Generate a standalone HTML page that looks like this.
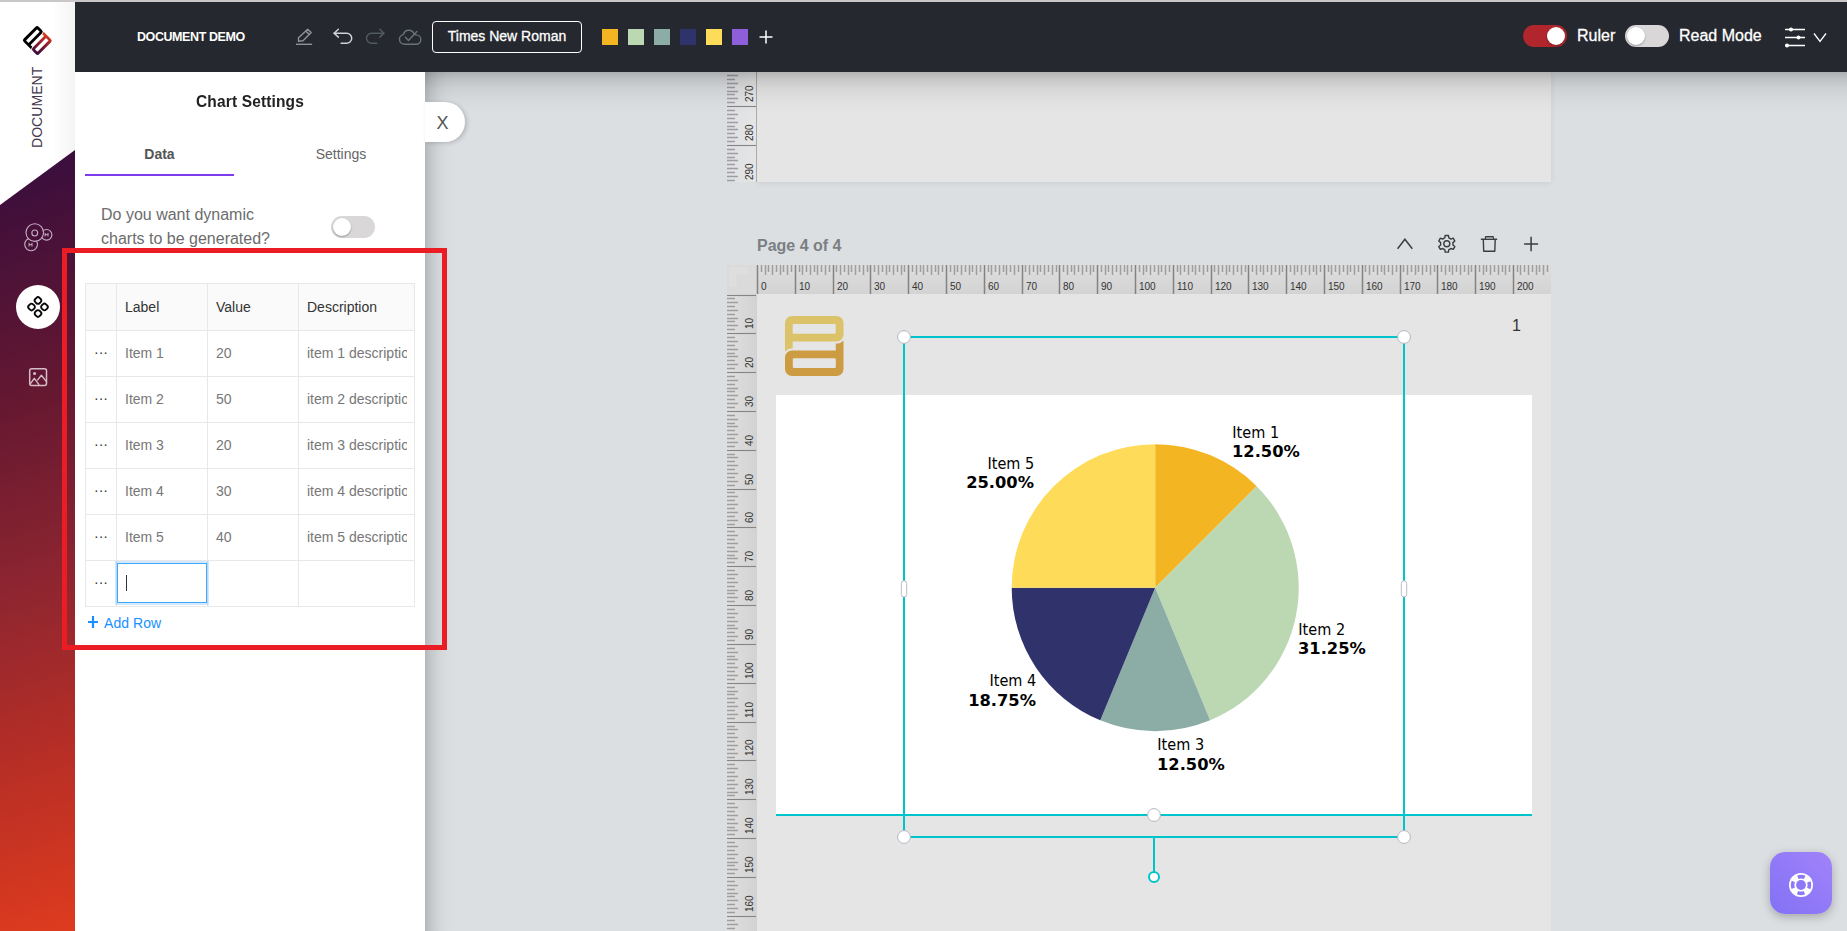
<!DOCTYPE html>
<html lang="en">
<head>
<meta charset="utf-8">
<title>Document Demo</title>
<style>
*{box-sizing:border-box;margin:0;padding:0}
html,body{width:1847px;height:931px;overflow:hidden}
body{position:relative;background:#dcdfe2;font-family:"Liberation Sans",Arial,sans-serif;color:#333}
.abs{position:absolute}
svg text{font-family:"Liberation Sans",Arial,sans-serif}
#topline{left:0;top:0;width:1847px;height:2px;background:#c9c7c7}
#canvas{left:425px;top:72px;width:1422px;height:859px;background:#dcdfe2;overflow:hidden}
#topbar{left:75px;top:2px;width:1772px;height:70px;background:#25282e}
#sidebar{left:0;top:2px;width:75px;height:929px;background:#fff;overflow:hidden}
#sidegrad{left:0;top:0;width:75px;height:929px;background:linear-gradient(163deg,#2b093b 0%,#3a0e3d 18%,#621731 41%,#8d2530 62%,#ba2f25 82%,#de3b1e 100%);clip-path:polygon(0 203px,75px 148px,75px 929px,0 929px)}
#panel{left:75px;top:72px;width:350px;height:859px;background:#fff}
.tt{color:#fff;font-weight:bold;font-size:12.5px;letter-spacing:-.42px}
.sw{position:absolute;top:27px;width:16px;height:16px}
.tog{position:absolute;width:44px;height:22px;border-radius:11px}
.tog i{position:absolute;top:2px;width:18px;height:18px;border-radius:9px;background:#fff;box-shadow:0 1px 2px rgba(0,0,0,.3)}
table{border-collapse:collapse;position:absolute;left:10px;top:211px;font-size:14px;table-layout:fixed;width:329px}
td,th{border:1px solid #e8e8e8;height:46px;text-align:left;font-weight:normal;padding:0 0 0 8px;white-space:nowrap;overflow:hidden}
th{background:#fafafa;color:#333;height:47px}
td{color:#777;padding-bottom:2px}
td div{overflow:hidden;white-space:nowrap;width:100px}
td.d{color:#333;padding:0 0 3px 0;text-align:center;font-size:14px;letter-spacing:0}
.hd{position:absolute;width:13px;height:13px;border-radius:50%;background:#fff;border:1px solid #c8c8c8;box-shadow:0 0 2px rgba(0,0,0,.2)}
</style>
</head>
<body>
<div id="canvas" class="abs">
  <!-- coordinates inside canvas are offset by (425,72); use wrapper to keep absolute page coords -->
  <div class="abs" style="left:-425px;top:-72px;width:1847px;height:931px">
    <!-- previous page -->
    <div class="abs" style="left:757px;top:72px;width:794px;height:110px;background:#e5e5e5;box-shadow:0 1px 6px rgba(0,0,0,.08)"></div>
    <svg width="30" height="110" viewBox="0 0 30 110" style="position:absolute;left:727px;top:72px">
<defs><linearGradient id="vg1" x1="0" y1="0" x2="1" y2="0"><stop offset="0" stop-color="#dee0e3"/><stop offset="1" stop-color="#e5e5e5"/></linearGradient></defs>
<rect x="0" y="0" width="30" height="110" fill="url(#vg1)"/>
<line x1="29.5" y1="0" x2="29.5" y2="110" stroke="#aaa" stroke-width="1"/>
<line x1="0" y1="-4.5" x2="29" y2="-4.5" stroke="#858585" stroke-width="1.100"/>
<text transform="translate(26,-9) rotate(-90)" font-size="10" fill="#333">260</text>
<line x1="0" y1="3.5" x2="11" y2="3.5" stroke="#9e9e9e" stroke-width="1.500"/>
<line x1="0" y1="7.5" x2="8" y2="7.5" stroke="#9e9e9e" stroke-width="1.500"/>
<line x1="0" y1="11.5" x2="11" y2="11.5" stroke="#9e9e9e" stroke-width="1.500"/>
<line x1="0" y1="15.5" x2="8" y2="15.5" stroke="#9e9e9e" stroke-width="1.500"/>
<line x1="0" y1="19.5" x2="11" y2="19.5" stroke="#9e9e9e" stroke-width="1.500"/>
<line x1="0" y1="22.5" x2="8" y2="22.5" stroke="#9e9e9e" stroke-width="1.500"/>
<line x1="0" y1="26.5" x2="11" y2="26.5" stroke="#9e9e9e" stroke-width="1.500"/>
<line x1="0" y1="30.5" x2="8" y2="30.5" stroke="#9e9e9e" stroke-width="1.500"/>
<line x1="0" y1="34.5" x2="29" y2="34.5" stroke="#858585" stroke-width="1.100"/>
<text transform="translate(26,30) rotate(-90)" font-size="10" fill="#333">270</text>
<line x1="0" y1="38.5" x2="8" y2="38.5" stroke="#9e9e9e" stroke-width="1.500"/>
<line x1="0" y1="42.5" x2="11" y2="42.5" stroke="#9e9e9e" stroke-width="1.500"/>
<line x1="0" y1="46.5" x2="8" y2="46.5" stroke="#9e9e9e" stroke-width="1.500"/>
<line x1="0" y1="50.5" x2="11" y2="50.5" stroke="#9e9e9e" stroke-width="1.500"/>
<line x1="0" y1="54.5" x2="8" y2="54.5" stroke="#9e9e9e" stroke-width="1.500"/>
<line x1="0" y1="57.5" x2="11" y2="57.5" stroke="#9e9e9e" stroke-width="1.500"/>
<line x1="0" y1="61.5" x2="8" y2="61.5" stroke="#9e9e9e" stroke-width="1.500"/>
<line x1="0" y1="65.5" x2="11" y2="65.5" stroke="#9e9e9e" stroke-width="1.500"/>
<line x1="0" y1="69.5" x2="8" y2="69.5" stroke="#9e9e9e" stroke-width="1.500"/>
<line x1="0" y1="73.5" x2="29" y2="73.5" stroke="#858585" stroke-width="1.100"/>
<text transform="translate(26,69) rotate(-90)" font-size="10" fill="#333">280</text>
<line x1="0" y1="77.5" x2="8" y2="77.5" stroke="#9e9e9e" stroke-width="1.500"/>
<line x1="0" y1="81.5" x2="11" y2="81.5" stroke="#9e9e9e" stroke-width="1.500"/>
<line x1="0" y1="85.5" x2="8" y2="85.5" stroke="#9e9e9e" stroke-width="1.500"/>
<line x1="0" y1="88.5" x2="11" y2="88.5" stroke="#9e9e9e" stroke-width="1.500"/>
<line x1="0" y1="92.5" x2="8" y2="92.5" stroke="#9e9e9e" stroke-width="1.500"/>
<line x1="0" y1="96.5" x2="11" y2="96.5" stroke="#9e9e9e" stroke-width="1.500"/>
<line x1="0" y1="100.5" x2="8" y2="100.5" stroke="#9e9e9e" stroke-width="1.500"/>
<line x1="0" y1="104.5" x2="11" y2="104.5" stroke="#9e9e9e" stroke-width="1.500"/>
<line x1="0" y1="108.5" x2="8" y2="108.5" stroke="#9e9e9e" stroke-width="1.500"/>
<text transform="translate(26,108) rotate(-90)" font-size="10" fill="#333">290</text>
</svg>
    <div class="abs" style="left:757px;top:237px;font-size:16px;font-weight:bold;color:#7b7f84">Page 4 of 4</div>
    <!-- page icons -->
    <svg class="abs" style="left:1390px;top:228px" width="160" height="32" viewBox="1390 228 160 32" fill="none" stroke="#3a3d40" stroke-width="1.400" stroke-linecap="round" stroke-linejoin="round">
      <path d="M1397.600 248.800L1404.900 239.300L1412.300 248.800" stroke-width="1.500" stroke-linejoin="miter" stroke-linecap="butt"/>
      <path d="M1444.78 237.94L1445.18 235.46L1448.42 235.46L1448.82 237.94A6.2 6.2 0 0 1 1450.87 239.12L1453.22 238.22L1454.84 241.03L1452.89 242.62A6.2 6.2 0 0 1 1452.89 244.98L1454.84 246.57L1453.22 249.38L1450.87 248.48A6.2 6.2 0 0 1 1448.82 249.66L1448.42 252.14L1445.18 252.14L1444.78 249.66A6.2 6.2 0 0 1 1442.73 248.48L1440.38 249.38L1438.76 246.57L1440.71 244.98A6.2 6.2 0 0 1 1440.71 242.62L1438.76 241.03L1440.38 238.22L1442.73 239.12A6.2 6.2 0 0 1 1444.78 237.94Z"/>
      <circle cx="1446.8" cy="243.8" r="3"/>
      <path d="M1481.400 239.300H1496.600M1485.600 239.300V236.800H1493.200V239.300M1483.300 239.300L1483.700 251.300H1494.800L1495.200 239.300"/>
      <path d="M1486 237.500H1493V239H1486Z" fill="#999" stroke="none"/>
      <path d="M1531.100 236.800V251.200M1524.100 244H1538.100" stroke-width="1.500" stroke-linecap="butt"/>
    </svg>
    <!-- page 4 -->
    <div class="abs" style="left:757px;top:294px;width:794px;height:640px;background:#e5e5e5"></div>
    <svg class="hr" width="824" height="29" viewBox="0 0 824 29" style="position:absolute;left:727px;top:265px">
<defs><linearGradient id="hg" x1="0" y1="0" x2="0" y2="1"><stop offset="0" stop-color="#dedede"/><stop offset="1" stop-color="#d3d3d3"/></linearGradient></defs>
<rect x="0" y="0" width="824" height="29" fill="url(#hg)"/>
<rect x="0" y="0" width="30" height="29" fill="#dadada"/>
<path d="M2 2.300h19.600v7.300h-12v12.200h-7.600z" fill="#dedede"/>
<line x1="30.5" y1="0" x2="30.5" y2="29" stroke="#838383" stroke-width="1.500"/>
<text x="34" y="25.300" font-size="10" fill="#333">0</text>
<line x1="34.5" y1="0" x2="34.5" y2="7" stroke="#9e9e9e" stroke-width="1.500"/>
<line x1="38.5" y1="0" x2="38.5" y2="10" stroke="#9e9e9e" stroke-width="1.500"/>
<line x1="41.5" y1="0" x2="41.5" y2="7" stroke="#9e9e9e" stroke-width="1.500"/>
<line x1="45.5" y1="0" x2="45.5" y2="10" stroke="#9e9e9e" stroke-width="1.500"/>
<line x1="49.5" y1="0" x2="49.5" y2="7" stroke="#9e9e9e" stroke-width="1.500"/>
<line x1="53.5" y1="0" x2="53.5" y2="10" stroke="#9e9e9e" stroke-width="1.500"/>
<line x1="56.5" y1="0" x2="56.5" y2="7" stroke="#9e9e9e" stroke-width="1.500"/>
<line x1="60.5" y1="0" x2="60.5" y2="10" stroke="#9e9e9e" stroke-width="1.500"/>
<line x1="64.5" y1="0" x2="64.5" y2="7" stroke="#9e9e9e" stroke-width="1.500"/>
<line x1="68.5" y1="0" x2="68.5" y2="29" stroke="#838383" stroke-width="1.500"/>
<text x="72" y="25.300" font-size="10" fill="#333">10</text>
<line x1="72.5" y1="0" x2="72.5" y2="7" stroke="#9e9e9e" stroke-width="1.500"/>
<line x1="75.5" y1="0" x2="75.5" y2="10" stroke="#9e9e9e" stroke-width="1.500"/>
<line x1="79.5" y1="0" x2="79.5" y2="7" stroke="#9e9e9e" stroke-width="1.500"/>
<line x1="83.5" y1="0" x2="83.5" y2="10" stroke="#9e9e9e" stroke-width="1.500"/>
<line x1="87.5" y1="0" x2="87.5" y2="7" stroke="#9e9e9e" stroke-width="1.500"/>
<line x1="90.5" y1="0" x2="90.5" y2="10" stroke="#9e9e9e" stroke-width="1.500"/>
<line x1="94.5" y1="0" x2="94.5" y2="7" stroke="#9e9e9e" stroke-width="1.500"/>
<line x1="98.5" y1="0" x2="98.5" y2="10" stroke="#9e9e9e" stroke-width="1.500"/>
<line x1="102.5" y1="0" x2="102.5" y2="7" stroke="#9e9e9e" stroke-width="1.500"/>
<line x1="106.5" y1="0" x2="106.5" y2="29" stroke="#838383" stroke-width="1.500"/>
<text x="110" y="25.300" font-size="10" fill="#333">20</text>
<line x1="109.5" y1="0" x2="109.5" y2="7" stroke="#9e9e9e" stroke-width="1.500"/>
<line x1="113.5" y1="0" x2="113.5" y2="10" stroke="#9e9e9e" stroke-width="1.500"/>
<line x1="117.5" y1="0" x2="117.5" y2="7" stroke="#9e9e9e" stroke-width="1.500"/>
<line x1="121.5" y1="0" x2="121.5" y2="10" stroke="#9e9e9e" stroke-width="1.500"/>
<line x1="124.5" y1="0" x2="124.5" y2="7" stroke="#9e9e9e" stroke-width="1.500"/>
<line x1="128.5" y1="0" x2="128.5" y2="10" stroke="#9e9e9e" stroke-width="1.500"/>
<line x1="132.5" y1="0" x2="132.5" y2="7" stroke="#9e9e9e" stroke-width="1.500"/>
<line x1="136.5" y1="0" x2="136.5" y2="10" stroke="#9e9e9e" stroke-width="1.500"/>
<line x1="140.5" y1="0" x2="140.5" y2="7" stroke="#9e9e9e" stroke-width="1.500"/>
<line x1="143.5" y1="0" x2="143.5" y2="29" stroke="#838383" stroke-width="1.500"/>
<text x="147" y="25.300" font-size="10" fill="#333">30</text>
<line x1="147.5" y1="0" x2="147.5" y2="7" stroke="#9e9e9e" stroke-width="1.500"/>
<line x1="151.5" y1="0" x2="151.5" y2="10" stroke="#9e9e9e" stroke-width="1.500"/>
<line x1="155.5" y1="0" x2="155.5" y2="7" stroke="#9e9e9e" stroke-width="1.500"/>
<line x1="159.5" y1="0" x2="159.5" y2="10" stroke="#9e9e9e" stroke-width="1.500"/>
<line x1="162.5" y1="0" x2="162.5" y2="7" stroke="#9e9e9e" stroke-width="1.500"/>
<line x1="166.5" y1="0" x2="166.5" y2="10" stroke="#9e9e9e" stroke-width="1.500"/>
<line x1="170.5" y1="0" x2="170.5" y2="7" stroke="#9e9e9e" stroke-width="1.500"/>
<line x1="174.5" y1="0" x2="174.5" y2="10" stroke="#9e9e9e" stroke-width="1.500"/>
<line x1="177.5" y1="0" x2="177.5" y2="7" stroke="#9e9e9e" stroke-width="1.500"/>
<line x1="181.5" y1="0" x2="181.5" y2="29" stroke="#838383" stroke-width="1.500"/>
<text x="185" y="25.300" font-size="10" fill="#333">40</text>
<line x1="185.5" y1="0" x2="185.5" y2="7" stroke="#9e9e9e" stroke-width="1.500"/>
<line x1="189.5" y1="0" x2="189.5" y2="10" stroke="#9e9e9e" stroke-width="1.500"/>
<line x1="193.5" y1="0" x2="193.5" y2="7" stroke="#9e9e9e" stroke-width="1.500"/>
<line x1="196.5" y1="0" x2="196.5" y2="10" stroke="#9e9e9e" stroke-width="1.500"/>
<line x1="200.5" y1="0" x2="200.5" y2="7" stroke="#9e9e9e" stroke-width="1.500"/>
<line x1="204.5" y1="0" x2="204.5" y2="10" stroke="#9e9e9e" stroke-width="1.500"/>
<line x1="208.5" y1="0" x2="208.5" y2="7" stroke="#9e9e9e" stroke-width="1.500"/>
<line x1="211.5" y1="0" x2="211.5" y2="10" stroke="#9e9e9e" stroke-width="1.500"/>
<line x1="215.5" y1="0" x2="215.5" y2="7" stroke="#9e9e9e" stroke-width="1.500"/>
<line x1="219.5" y1="0" x2="219.5" y2="29" stroke="#838383" stroke-width="1.500"/>
<text x="223" y="25.300" font-size="10" fill="#333">50</text>
<line x1="223.5" y1="0" x2="223.5" y2="7" stroke="#9e9e9e" stroke-width="1.500"/>
<line x1="227.5" y1="0" x2="227.5" y2="10" stroke="#9e9e9e" stroke-width="1.500"/>
<line x1="230.5" y1="0" x2="230.5" y2="7" stroke="#9e9e9e" stroke-width="1.500"/>
<line x1="234.5" y1="0" x2="234.5" y2="10" stroke="#9e9e9e" stroke-width="1.500"/>
<line x1="238.5" y1="0" x2="238.5" y2="7" stroke="#9e9e9e" stroke-width="1.500"/>
<line x1="242.5" y1="0" x2="242.5" y2="10" stroke="#9e9e9e" stroke-width="1.500"/>
<line x1="245.5" y1="0" x2="245.5" y2="7" stroke="#9e9e9e" stroke-width="1.500"/>
<line x1="249.5" y1="0" x2="249.5" y2="10" stroke="#9e9e9e" stroke-width="1.500"/>
<line x1="253.5" y1="0" x2="253.5" y2="7" stroke="#9e9e9e" stroke-width="1.500"/>
<line x1="257.5" y1="0" x2="257.5" y2="29" stroke="#838383" stroke-width="1.500"/>
<text x="261" y="25.300" font-size="10" fill="#333">60</text>
<line x1="261.5" y1="0" x2="261.5" y2="7" stroke="#9e9e9e" stroke-width="1.500"/>
<line x1="264.5" y1="0" x2="264.5" y2="10" stroke="#9e9e9e" stroke-width="1.500"/>
<line x1="268.5" y1="0" x2="268.5" y2="7" stroke="#9e9e9e" stroke-width="1.500"/>
<line x1="272.5" y1="0" x2="272.5" y2="10" stroke="#9e9e9e" stroke-width="1.500"/>
<line x1="276.5" y1="0" x2="276.5" y2="7" stroke="#9e9e9e" stroke-width="1.500"/>
<line x1="279.5" y1="0" x2="279.5" y2="10" stroke="#9e9e9e" stroke-width="1.500"/>
<line x1="283.5" y1="0" x2="283.5" y2="7" stroke="#9e9e9e" stroke-width="1.500"/>
<line x1="287.5" y1="0" x2="287.5" y2="10" stroke="#9e9e9e" stroke-width="1.500"/>
<line x1="291.5" y1="0" x2="291.5" y2="7" stroke="#9e9e9e" stroke-width="1.500"/>
<line x1="295.5" y1="0" x2="295.5" y2="29" stroke="#838383" stroke-width="1.500"/>
<text x="299" y="25.300" font-size="10" fill="#333">70</text>
<line x1="298.5" y1="0" x2="298.5" y2="7" stroke="#9e9e9e" stroke-width="1.500"/>
<line x1="302.5" y1="0" x2="302.5" y2="10" stroke="#9e9e9e" stroke-width="1.500"/>
<line x1="306.5" y1="0" x2="306.5" y2="7" stroke="#9e9e9e" stroke-width="1.500"/>
<line x1="310.5" y1="0" x2="310.5" y2="10" stroke="#9e9e9e" stroke-width="1.500"/>
<line x1="313.5" y1="0" x2="313.5" y2="7" stroke="#9e9e9e" stroke-width="1.500"/>
<line x1="317.5" y1="0" x2="317.5" y2="10" stroke="#9e9e9e" stroke-width="1.500"/>
<line x1="321.5" y1="0" x2="321.5" y2="7" stroke="#9e9e9e" stroke-width="1.500"/>
<line x1="325.5" y1="0" x2="325.5" y2="10" stroke="#9e9e9e" stroke-width="1.500"/>
<line x1="329.5" y1="0" x2="329.5" y2="7" stroke="#9e9e9e" stroke-width="1.500"/>
<line x1="332.5" y1="0" x2="332.5" y2="29" stroke="#838383" stroke-width="1.500"/>
<text x="336" y="25.300" font-size="10" fill="#333">80</text>
<line x1="336.5" y1="0" x2="336.5" y2="7" stroke="#9e9e9e" stroke-width="1.500"/>
<line x1="340.5" y1="0" x2="340.5" y2="10" stroke="#9e9e9e" stroke-width="1.500"/>
<line x1="344.5" y1="0" x2="344.5" y2="7" stroke="#9e9e9e" stroke-width="1.500"/>
<line x1="347.5" y1="0" x2="347.5" y2="10" stroke="#9e9e9e" stroke-width="1.500"/>
<line x1="351.5" y1="0" x2="351.5" y2="7" stroke="#9e9e9e" stroke-width="1.500"/>
<line x1="355.5" y1="0" x2="355.5" y2="10" stroke="#9e9e9e" stroke-width="1.500"/>
<line x1="359.5" y1="0" x2="359.5" y2="7" stroke="#9e9e9e" stroke-width="1.500"/>
<line x1="363.5" y1="0" x2="363.5" y2="10" stroke="#9e9e9e" stroke-width="1.500"/>
<line x1="366.5" y1="0" x2="366.5" y2="7" stroke="#9e9e9e" stroke-width="1.500"/>
<line x1="370.5" y1="0" x2="370.5" y2="29" stroke="#838383" stroke-width="1.500"/>
<text x="374" y="25.300" font-size="10" fill="#333">90</text>
<line x1="374.5" y1="0" x2="374.5" y2="7" stroke="#9e9e9e" stroke-width="1.500"/>
<line x1="378.5" y1="0" x2="378.5" y2="10" stroke="#9e9e9e" stroke-width="1.500"/>
<line x1="381.5" y1="0" x2="381.5" y2="7" stroke="#9e9e9e" stroke-width="1.500"/>
<line x1="385.5" y1="0" x2="385.5" y2="10" stroke="#9e9e9e" stroke-width="1.500"/>
<line x1="389.5" y1="0" x2="389.5" y2="7" stroke="#9e9e9e" stroke-width="1.500"/>
<line x1="393.5" y1="0" x2="393.5" y2="10" stroke="#9e9e9e" stroke-width="1.500"/>
<line x1="397.5" y1="0" x2="397.5" y2="7" stroke="#9e9e9e" stroke-width="1.500"/>
<line x1="400.5" y1="0" x2="400.5" y2="10" stroke="#9e9e9e" stroke-width="1.500"/>
<line x1="404.5" y1="0" x2="404.5" y2="7" stroke="#9e9e9e" stroke-width="1.500"/>
<line x1="408.5" y1="0" x2="408.5" y2="29" stroke="#838383" stroke-width="1.500"/>
<text x="412" y="25.300" font-size="10" fill="#333">100</text>
<line x1="412.5" y1="0" x2="412.5" y2="7" stroke="#9e9e9e" stroke-width="1.500"/>
<line x1="416.5" y1="0" x2="416.5" y2="10" stroke="#9e9e9e" stroke-width="1.500"/>
<line x1="419.5" y1="0" x2="419.5" y2="7" stroke="#9e9e9e" stroke-width="1.500"/>
<line x1="423.5" y1="0" x2="423.5" y2="10" stroke="#9e9e9e" stroke-width="1.500"/>
<line x1="427.5" y1="0" x2="427.5" y2="7" stroke="#9e9e9e" stroke-width="1.500"/>
<line x1="431.5" y1="0" x2="431.5" y2="10" stroke="#9e9e9e" stroke-width="1.500"/>
<line x1="434.5" y1="0" x2="434.5" y2="7" stroke="#9e9e9e" stroke-width="1.500"/>
<line x1="438.5" y1="0" x2="438.5" y2="10" stroke="#9e9e9e" stroke-width="1.500"/>
<line x1="442.5" y1="0" x2="442.5" y2="7" stroke="#9e9e9e" stroke-width="1.500"/>
<line x1="446.5" y1="0" x2="446.5" y2="29" stroke="#838383" stroke-width="1.500"/>
<text x="450" y="25.300" font-size="10" fill="#333">110</text>
<line x1="450.5" y1="0" x2="450.5" y2="7" stroke="#9e9e9e" stroke-width="1.500"/>
<line x1="453.5" y1="0" x2="453.5" y2="10" stroke="#9e9e9e" stroke-width="1.500"/>
<line x1="457.5" y1="0" x2="457.5" y2="7" stroke="#9e9e9e" stroke-width="1.500"/>
<line x1="461.5" y1="0" x2="461.5" y2="10" stroke="#9e9e9e" stroke-width="1.500"/>
<line x1="465.5" y1="0" x2="465.5" y2="7" stroke="#9e9e9e" stroke-width="1.500"/>
<line x1="468.5" y1="0" x2="468.5" y2="10" stroke="#9e9e9e" stroke-width="1.500"/>
<line x1="472.5" y1="0" x2="472.5" y2="7" stroke="#9e9e9e" stroke-width="1.500"/>
<line x1="476.5" y1="0" x2="476.5" y2="10" stroke="#9e9e9e" stroke-width="1.500"/>
<line x1="480.5" y1="0" x2="480.5" y2="7" stroke="#9e9e9e" stroke-width="1.500"/>
<line x1="484.5" y1="0" x2="484.5" y2="29" stroke="#838383" stroke-width="1.500"/>
<text x="488" y="25.300" font-size="10" fill="#333">120</text>
<line x1="487.5" y1="0" x2="487.5" y2="7" stroke="#9e9e9e" stroke-width="1.500"/>
<line x1="491.5" y1="0" x2="491.5" y2="10" stroke="#9e9e9e" stroke-width="1.500"/>
<line x1="495.5" y1="0" x2="495.5" y2="7" stroke="#9e9e9e" stroke-width="1.500"/>
<line x1="499.5" y1="0" x2="499.5" y2="10" stroke="#9e9e9e" stroke-width="1.500"/>
<line x1="502.5" y1="0" x2="502.5" y2="7" stroke="#9e9e9e" stroke-width="1.500"/>
<line x1="506.5" y1="0" x2="506.5" y2="10" stroke="#9e9e9e" stroke-width="1.500"/>
<line x1="510.5" y1="0" x2="510.5" y2="7" stroke="#9e9e9e" stroke-width="1.500"/>
<line x1="514.5" y1="0" x2="514.5" y2="10" stroke="#9e9e9e" stroke-width="1.500"/>
<line x1="518.5" y1="0" x2="518.5" y2="7" stroke="#9e9e9e" stroke-width="1.500"/>
<line x1="521.5" y1="0" x2="521.5" y2="29" stroke="#838383" stroke-width="1.500"/>
<text x="525" y="25.300" font-size="10" fill="#333">130</text>
<line x1="525.5" y1="0" x2="525.5" y2="7" stroke="#9e9e9e" stroke-width="1.500"/>
<line x1="529.5" y1="0" x2="529.5" y2="10" stroke="#9e9e9e" stroke-width="1.500"/>
<line x1="533.5" y1="0" x2="533.5" y2="7" stroke="#9e9e9e" stroke-width="1.500"/>
<line x1="536.5" y1="0" x2="536.5" y2="10" stroke="#9e9e9e" stroke-width="1.500"/>
<line x1="540.5" y1="0" x2="540.5" y2="7" stroke="#9e9e9e" stroke-width="1.500"/>
<line x1="544.5" y1="0" x2="544.5" y2="10" stroke="#9e9e9e" stroke-width="1.500"/>
<line x1="548.5" y1="0" x2="548.5" y2="7" stroke="#9e9e9e" stroke-width="1.500"/>
<line x1="552.5" y1="0" x2="552.5" y2="10" stroke="#9e9e9e" stroke-width="1.500"/>
<line x1="555.5" y1="0" x2="555.5" y2="7" stroke="#9e9e9e" stroke-width="1.500"/>
<line x1="559.5" y1="0" x2="559.5" y2="29" stroke="#838383" stroke-width="1.500"/>
<text x="563" y="25.300" font-size="10" fill="#333">140</text>
<line x1="563.5" y1="0" x2="563.5" y2="7" stroke="#9e9e9e" stroke-width="1.500"/>
<line x1="567.5" y1="0" x2="567.5" y2="10" stroke="#9e9e9e" stroke-width="1.500"/>
<line x1="570.5" y1="0" x2="570.5" y2="7" stroke="#9e9e9e" stroke-width="1.500"/>
<line x1="574.5" y1="0" x2="574.5" y2="10" stroke="#9e9e9e" stroke-width="1.500"/>
<line x1="578.5" y1="0" x2="578.5" y2="7" stroke="#9e9e9e" stroke-width="1.500"/>
<line x1="582.5" y1="0" x2="582.5" y2="10" stroke="#9e9e9e" stroke-width="1.500"/>
<line x1="586.5" y1="0" x2="586.5" y2="7" stroke="#9e9e9e" stroke-width="1.500"/>
<line x1="589.5" y1="0" x2="589.5" y2="10" stroke="#9e9e9e" stroke-width="1.500"/>
<line x1="593.5" y1="0" x2="593.5" y2="7" stroke="#9e9e9e" stroke-width="1.500"/>
<line x1="597.5" y1="0" x2="597.5" y2="29" stroke="#838383" stroke-width="1.500"/>
<text x="601" y="25.300" font-size="10" fill="#333">150</text>
<line x1="601.5" y1="0" x2="601.5" y2="7" stroke="#9e9e9e" stroke-width="1.500"/>
<line x1="604.5" y1="0" x2="604.5" y2="10" stroke="#9e9e9e" stroke-width="1.500"/>
<line x1="608.5" y1="0" x2="608.5" y2="7" stroke="#9e9e9e" stroke-width="1.500"/>
<line x1="612.5" y1="0" x2="612.5" y2="10" stroke="#9e9e9e" stroke-width="1.500"/>
<line x1="616.5" y1="0" x2="616.5" y2="7" stroke="#9e9e9e" stroke-width="1.500"/>
<line x1="620.5" y1="0" x2="620.5" y2="10" stroke="#9e9e9e" stroke-width="1.500"/>
<line x1="623.5" y1="0" x2="623.5" y2="7" stroke="#9e9e9e" stroke-width="1.500"/>
<line x1="627.5" y1="0" x2="627.5" y2="10" stroke="#9e9e9e" stroke-width="1.500"/>
<line x1="631.5" y1="0" x2="631.5" y2="7" stroke="#9e9e9e" stroke-width="1.500"/>
<line x1="635.5" y1="0" x2="635.5" y2="29" stroke="#838383" stroke-width="1.500"/>
<text x="639" y="25.300" font-size="10" fill="#333">160</text>
<line x1="638.5" y1="0" x2="638.5" y2="7" stroke="#9e9e9e" stroke-width="1.500"/>
<line x1="642.5" y1="0" x2="642.5" y2="10" stroke="#9e9e9e" stroke-width="1.500"/>
<line x1="646.5" y1="0" x2="646.5" y2="7" stroke="#9e9e9e" stroke-width="1.500"/>
<line x1="650.5" y1="0" x2="650.5" y2="10" stroke="#9e9e9e" stroke-width="1.500"/>
<line x1="654.5" y1="0" x2="654.5" y2="7" stroke="#9e9e9e" stroke-width="1.500"/>
<line x1="657.5" y1="0" x2="657.5" y2="10" stroke="#9e9e9e" stroke-width="1.500"/>
<line x1="661.5" y1="0" x2="661.5" y2="7" stroke="#9e9e9e" stroke-width="1.500"/>
<line x1="665.5" y1="0" x2="665.5" y2="10" stroke="#9e9e9e" stroke-width="1.500"/>
<line x1="669.5" y1="0" x2="669.5" y2="7" stroke="#9e9e9e" stroke-width="1.500"/>
<line x1="673.5" y1="0" x2="673.5" y2="29" stroke="#838383" stroke-width="1.500"/>
<text x="677" y="25.300" font-size="10" fill="#333">170</text>
<line x1="676.5" y1="0" x2="676.5" y2="7" stroke="#9e9e9e" stroke-width="1.500"/>
<line x1="680.5" y1="0" x2="680.5" y2="10" stroke="#9e9e9e" stroke-width="1.500"/>
<line x1="684.5" y1="0" x2="684.5" y2="7" stroke="#9e9e9e" stroke-width="1.500"/>
<line x1="688.5" y1="0" x2="688.5" y2="10" stroke="#9e9e9e" stroke-width="1.500"/>
<line x1="691.5" y1="0" x2="691.5" y2="7" stroke="#9e9e9e" stroke-width="1.500"/>
<line x1="695.5" y1="0" x2="695.5" y2="10" stroke="#9e9e9e" stroke-width="1.500"/>
<line x1="699.5" y1="0" x2="699.5" y2="7" stroke="#9e9e9e" stroke-width="1.500"/>
<line x1="703.5" y1="0" x2="703.5" y2="10" stroke="#9e9e9e" stroke-width="1.500"/>
<line x1="707.5" y1="0" x2="707.5" y2="7" stroke="#9e9e9e" stroke-width="1.500"/>
<line x1="710.5" y1="0" x2="710.5" y2="29" stroke="#838383" stroke-width="1.500"/>
<text x="714" y="25.300" font-size="10" fill="#333">180</text>
<line x1="714.5" y1="0" x2="714.5" y2="7" stroke="#9e9e9e" stroke-width="1.500"/>
<line x1="718.5" y1="0" x2="718.5" y2="10" stroke="#9e9e9e" stroke-width="1.500"/>
<line x1="722.5" y1="0" x2="722.5" y2="7" stroke="#9e9e9e" stroke-width="1.500"/>
<line x1="725.5" y1="0" x2="725.5" y2="10" stroke="#9e9e9e" stroke-width="1.500"/>
<line x1="729.5" y1="0" x2="729.5" y2="7" stroke="#9e9e9e" stroke-width="1.500"/>
<line x1="733.5" y1="0" x2="733.5" y2="10" stroke="#9e9e9e" stroke-width="1.500"/>
<line x1="737.5" y1="0" x2="737.5" y2="7" stroke="#9e9e9e" stroke-width="1.500"/>
<line x1="741.5" y1="0" x2="741.5" y2="10" stroke="#9e9e9e" stroke-width="1.500"/>
<line x1="744.5" y1="0" x2="744.5" y2="7" stroke="#9e9e9e" stroke-width="1.500"/>
<line x1="748.5" y1="0" x2="748.5" y2="29" stroke="#838383" stroke-width="1.500"/>
<text x="752" y="25.300" font-size="10" fill="#333">190</text>
<line x1="752.5" y1="0" x2="752.5" y2="7" stroke="#9e9e9e" stroke-width="1.500"/>
<line x1="756.5" y1="0" x2="756.5" y2="10" stroke="#9e9e9e" stroke-width="1.500"/>
<line x1="759.5" y1="0" x2="759.5" y2="7" stroke="#9e9e9e" stroke-width="1.500"/>
<line x1="763.5" y1="0" x2="763.5" y2="10" stroke="#9e9e9e" stroke-width="1.500"/>
<line x1="767.5" y1="0" x2="767.5" y2="7" stroke="#9e9e9e" stroke-width="1.500"/>
<line x1="771.5" y1="0" x2="771.5" y2="10" stroke="#9e9e9e" stroke-width="1.500"/>
<line x1="775.5" y1="0" x2="775.5" y2="7" stroke="#9e9e9e" stroke-width="1.500"/>
<line x1="778.5" y1="0" x2="778.5" y2="10" stroke="#9e9e9e" stroke-width="1.500"/>
<line x1="782.5" y1="0" x2="782.5" y2="7" stroke="#9e9e9e" stroke-width="1.500"/>
<line x1="786.5" y1="0" x2="786.5" y2="29" stroke="#838383" stroke-width="1.500"/>
<text x="790" y="25.300" font-size="10" fill="#333">200</text>
<line x1="790.5" y1="0" x2="790.5" y2="7" stroke="#9e9e9e" stroke-width="1.500"/>
<line x1="793.5" y1="0" x2="793.5" y2="10" stroke="#9e9e9e" stroke-width="1.500"/>
<line x1="797.5" y1="0" x2="797.5" y2="7" stroke="#9e9e9e" stroke-width="1.500"/>
<line x1="801.5" y1="0" x2="801.5" y2="10" stroke="#9e9e9e" stroke-width="1.500"/>
<line x1="805.5" y1="0" x2="805.5" y2="7" stroke="#9e9e9e" stroke-width="1.500"/>
<line x1="809.5" y1="0" x2="809.5" y2="10" stroke="#9e9e9e" stroke-width="1.500"/>
<line x1="812.5" y1="0" x2="812.5" y2="7" stroke="#9e9e9e" stroke-width="1.500"/>
<line x1="816.5" y1="0" x2="816.5" y2="10" stroke="#9e9e9e" stroke-width="1.500"/>
<line x1="820.5" y1="0" x2="820.5" y2="7" stroke="#9e9e9e" stroke-width="1.500"/>
</svg>
    <svg width="30" height="637" viewBox="0 0 30 637" style="position:absolute;left:727px;top:294px">
<defs><linearGradient id="vg2" x1="0" y1="0" x2="1" y2="0"><stop offset="0" stop-color="#e0e0e0"/><stop offset="1" stop-color="#d2d2d2"/></linearGradient></defs>
<rect x="0" y="0" width="30" height="637" fill="url(#vg2)"/>
<line x1="0" y1="1.5" x2="29" y2="1.5" stroke="#858585" stroke-width="1.100"/>
<line x1="0" y1="4.5" x2="8" y2="4.5" stroke="#9e9e9e" stroke-width="1.500"/>
<line x1="0" y1="8.5" x2="11" y2="8.5" stroke="#9e9e9e" stroke-width="1.500"/>
<line x1="0" y1="12.5" x2="8" y2="12.5" stroke="#9e9e9e" stroke-width="1.500"/>
<line x1="0" y1="16.5" x2="11" y2="16.5" stroke="#9e9e9e" stroke-width="1.500"/>
<line x1="0" y1="20.5" x2="8" y2="20.5" stroke="#9e9e9e" stroke-width="1.500"/>
<line x1="0" y1="24.5" x2="11" y2="24.5" stroke="#9e9e9e" stroke-width="1.500"/>
<line x1="0" y1="27.5" x2="8" y2="27.5" stroke="#9e9e9e" stroke-width="1.500"/>
<line x1="0" y1="31.5" x2="11" y2="31.5" stroke="#9e9e9e" stroke-width="1.500"/>
<line x1="0" y1="35.5" x2="8" y2="35.5" stroke="#9e9e9e" stroke-width="1.500"/>
<line x1="0" y1="39.5" x2="29" y2="39.5" stroke="#858585" stroke-width="1.100"/>
<text transform="translate(26,35) rotate(-90)" font-size="10" fill="#333">10</text>
<line x1="0" y1="43.5" x2="8" y2="43.5" stroke="#9e9e9e" stroke-width="1.500"/>
<line x1="0" y1="47.5" x2="11" y2="47.5" stroke="#9e9e9e" stroke-width="1.500"/>
<line x1="0" y1="51.5" x2="8" y2="51.5" stroke="#9e9e9e" stroke-width="1.500"/>
<line x1="0" y1="55.5" x2="11" y2="55.5" stroke="#9e9e9e" stroke-width="1.500"/>
<line x1="0" y1="59.5" x2="8" y2="59.5" stroke="#9e9e9e" stroke-width="1.500"/>
<line x1="0" y1="62.5" x2="11" y2="62.5" stroke="#9e9e9e" stroke-width="1.500"/>
<line x1="0" y1="66.5" x2="8" y2="66.5" stroke="#9e9e9e" stroke-width="1.500"/>
<line x1="0" y1="70.5" x2="11" y2="70.5" stroke="#9e9e9e" stroke-width="1.500"/>
<line x1="0" y1="74.5" x2="8" y2="74.5" stroke="#9e9e9e" stroke-width="1.500"/>
<line x1="0" y1="78.5" x2="29" y2="78.5" stroke="#858585" stroke-width="1.100"/>
<text transform="translate(26,74) rotate(-90)" font-size="10" fill="#333">20</text>
<line x1="0" y1="82.5" x2="8" y2="82.5" stroke="#9e9e9e" stroke-width="1.500"/>
<line x1="0" y1="86.5" x2="11" y2="86.5" stroke="#9e9e9e" stroke-width="1.500"/>
<line x1="0" y1="90.5" x2="8" y2="90.5" stroke="#9e9e9e" stroke-width="1.500"/>
<line x1="0" y1="94.5" x2="11" y2="94.5" stroke="#9e9e9e" stroke-width="1.500"/>
<line x1="0" y1="97.5" x2="8" y2="97.5" stroke="#9e9e9e" stroke-width="1.500"/>
<line x1="0" y1="101.5" x2="11" y2="101.5" stroke="#9e9e9e" stroke-width="1.500"/>
<line x1="0" y1="105.5" x2="8" y2="105.5" stroke="#9e9e9e" stroke-width="1.500"/>
<line x1="0" y1="109.5" x2="11" y2="109.5" stroke="#9e9e9e" stroke-width="1.500"/>
<line x1="0" y1="113.5" x2="8" y2="113.5" stroke="#9e9e9e" stroke-width="1.500"/>
<line x1="0" y1="117.5" x2="29" y2="117.5" stroke="#858585" stroke-width="1.100"/>
<text transform="translate(26,113) rotate(-90)" font-size="10" fill="#333">30</text>
<line x1="0" y1="121.5" x2="8" y2="121.5" stroke="#9e9e9e" stroke-width="1.500"/>
<line x1="0" y1="125.5" x2="11" y2="125.5" stroke="#9e9e9e" stroke-width="1.500"/>
<line x1="0" y1="129.5" x2="8" y2="129.5" stroke="#9e9e9e" stroke-width="1.500"/>
<line x1="0" y1="132.5" x2="11" y2="132.5" stroke="#9e9e9e" stroke-width="1.500"/>
<line x1="0" y1="136.5" x2="8" y2="136.5" stroke="#9e9e9e" stroke-width="1.500"/>
<line x1="0" y1="140.5" x2="11" y2="140.5" stroke="#9e9e9e" stroke-width="1.500"/>
<line x1="0" y1="144.5" x2="8" y2="144.5" stroke="#9e9e9e" stroke-width="1.500"/>
<line x1="0" y1="148.5" x2="11" y2="148.5" stroke="#9e9e9e" stroke-width="1.500"/>
<line x1="0" y1="152.5" x2="8" y2="152.5" stroke="#9e9e9e" stroke-width="1.500"/>
<line x1="0" y1="156.5" x2="29" y2="156.5" stroke="#858585" stroke-width="1.100"/>
<text transform="translate(26,152) rotate(-90)" font-size="10" fill="#333">40</text>
<line x1="0" y1="160.5" x2="8" y2="160.5" stroke="#9e9e9e" stroke-width="1.500"/>
<line x1="0" y1="163.5" x2="11" y2="163.5" stroke="#9e9e9e" stroke-width="1.500"/>
<line x1="0" y1="167.5" x2="8" y2="167.5" stroke="#9e9e9e" stroke-width="1.500"/>
<line x1="0" y1="171.5" x2="11" y2="171.5" stroke="#9e9e9e" stroke-width="1.500"/>
<line x1="0" y1="175.5" x2="8" y2="175.5" stroke="#9e9e9e" stroke-width="1.500"/>
<line x1="0" y1="179.5" x2="11" y2="179.5" stroke="#9e9e9e" stroke-width="1.500"/>
<line x1="0" y1="183.5" x2="8" y2="183.5" stroke="#9e9e9e" stroke-width="1.500"/>
<line x1="0" y1="187.5" x2="11" y2="187.5" stroke="#9e9e9e" stroke-width="1.500"/>
<line x1="0" y1="191.5" x2="8" y2="191.5" stroke="#9e9e9e" stroke-width="1.500"/>
<line x1="0" y1="195.5" x2="29" y2="195.5" stroke="#858585" stroke-width="1.100"/>
<text transform="translate(26,191) rotate(-90)" font-size="10" fill="#333">50</text>
<line x1="0" y1="198.5" x2="8" y2="198.5" stroke="#9e9e9e" stroke-width="1.500"/>
<line x1="0" y1="202.5" x2="11" y2="202.5" stroke="#9e9e9e" stroke-width="1.500"/>
<line x1="0" y1="206.5" x2="8" y2="206.5" stroke="#9e9e9e" stroke-width="1.500"/>
<line x1="0" y1="210.5" x2="11" y2="210.5" stroke="#9e9e9e" stroke-width="1.500"/>
<line x1="0" y1="214.5" x2="8" y2="214.5" stroke="#9e9e9e" stroke-width="1.500"/>
<line x1="0" y1="218.5" x2="11" y2="218.5" stroke="#9e9e9e" stroke-width="1.500"/>
<line x1="0" y1="222.5" x2="8" y2="222.5" stroke="#9e9e9e" stroke-width="1.500"/>
<line x1="0" y1="226.5" x2="11" y2="226.5" stroke="#9e9e9e" stroke-width="1.500"/>
<line x1="0" y1="230.5" x2="8" y2="230.5" stroke="#9e9e9e" stroke-width="1.500"/>
<line x1="0" y1="233.5" x2="29" y2="233.5" stroke="#858585" stroke-width="1.100"/>
<text transform="translate(26,229) rotate(-90)" font-size="10" fill="#333">60</text>
<line x1="0" y1="237.5" x2="8" y2="237.5" stroke="#9e9e9e" stroke-width="1.500"/>
<line x1="0" y1="241.5" x2="11" y2="241.5" stroke="#9e9e9e" stroke-width="1.500"/>
<line x1="0" y1="245.5" x2="8" y2="245.5" stroke="#9e9e9e" stroke-width="1.500"/>
<line x1="0" y1="249.5" x2="11" y2="249.5" stroke="#9e9e9e" stroke-width="1.500"/>
<line x1="0" y1="253.5" x2="8" y2="253.5" stroke="#9e9e9e" stroke-width="1.500"/>
<line x1="0" y1="257.5" x2="11" y2="257.5" stroke="#9e9e9e" stroke-width="1.500"/>
<line x1="0" y1="261.5" x2="8" y2="261.5" stroke="#9e9e9e" stroke-width="1.500"/>
<line x1="0" y1="264.5" x2="11" y2="264.5" stroke="#9e9e9e" stroke-width="1.500"/>
<line x1="0" y1="268.5" x2="8" y2="268.5" stroke="#9e9e9e" stroke-width="1.500"/>
<line x1="0" y1="272.5" x2="29" y2="272.5" stroke="#858585" stroke-width="1.100"/>
<text transform="translate(26,268) rotate(-90)" font-size="10" fill="#333">70</text>
<line x1="0" y1="276.5" x2="8" y2="276.5" stroke="#9e9e9e" stroke-width="1.500"/>
<line x1="0" y1="280.5" x2="11" y2="280.5" stroke="#9e9e9e" stroke-width="1.500"/>
<line x1="0" y1="284.5" x2="8" y2="284.5" stroke="#9e9e9e" stroke-width="1.500"/>
<line x1="0" y1="288.5" x2="11" y2="288.5" stroke="#9e9e9e" stroke-width="1.500"/>
<line x1="0" y1="292.5" x2="8" y2="292.5" stroke="#9e9e9e" stroke-width="1.500"/>
<line x1="0" y1="296.5" x2="11" y2="296.5" stroke="#9e9e9e" stroke-width="1.500"/>
<line x1="0" y1="299.5" x2="8" y2="299.5" stroke="#9e9e9e" stroke-width="1.500"/>
<line x1="0" y1="303.5" x2="11" y2="303.5" stroke="#9e9e9e" stroke-width="1.500"/>
<line x1="0" y1="307.5" x2="8" y2="307.5" stroke="#9e9e9e" stroke-width="1.500"/>
<line x1="0" y1="311.5" x2="29" y2="311.5" stroke="#858585" stroke-width="1.100"/>
<text transform="translate(26,307) rotate(-90)" font-size="10" fill="#333">80</text>
<line x1="0" y1="315.5" x2="8" y2="315.5" stroke="#9e9e9e" stroke-width="1.500"/>
<line x1="0" y1="319.5" x2="11" y2="319.5" stroke="#9e9e9e" stroke-width="1.500"/>
<line x1="0" y1="323.5" x2="8" y2="323.5" stroke="#9e9e9e" stroke-width="1.500"/>
<line x1="0" y1="327.5" x2="11" y2="327.5" stroke="#9e9e9e" stroke-width="1.500"/>
<line x1="0" y1="331.5" x2="8" y2="331.5" stroke="#9e9e9e" stroke-width="1.500"/>
<line x1="0" y1="334.5" x2="11" y2="334.5" stroke="#9e9e9e" stroke-width="1.500"/>
<line x1="0" y1="338.5" x2="8" y2="338.5" stroke="#9e9e9e" stroke-width="1.500"/>
<line x1="0" y1="342.5" x2="11" y2="342.5" stroke="#9e9e9e" stroke-width="1.500"/>
<line x1="0" y1="346.5" x2="8" y2="346.5" stroke="#9e9e9e" stroke-width="1.500"/>
<line x1="0" y1="350.5" x2="29" y2="350.5" stroke="#858585" stroke-width="1.100"/>
<text transform="translate(26,346) rotate(-90)" font-size="10" fill="#333">90</text>
<line x1="0" y1="354.5" x2="8" y2="354.5" stroke="#9e9e9e" stroke-width="1.500"/>
<line x1="0" y1="358.5" x2="11" y2="358.5" stroke="#9e9e9e" stroke-width="1.500"/>
<line x1="0" y1="362.5" x2="8" y2="362.5" stroke="#9e9e9e" stroke-width="1.500"/>
<line x1="0" y1="365.5" x2="11" y2="365.5" stroke="#9e9e9e" stroke-width="1.500"/>
<line x1="0" y1="369.5" x2="8" y2="369.5" stroke="#9e9e9e" stroke-width="1.500"/>
<line x1="0" y1="373.5" x2="11" y2="373.5" stroke="#9e9e9e" stroke-width="1.500"/>
<line x1="0" y1="377.5" x2="8" y2="377.5" stroke="#9e9e9e" stroke-width="1.500"/>
<line x1="0" y1="381.5" x2="11" y2="381.5" stroke="#9e9e9e" stroke-width="1.500"/>
<line x1="0" y1="385.5" x2="8" y2="385.5" stroke="#9e9e9e" stroke-width="1.500"/>
<line x1="0" y1="389.5" x2="29" y2="389.5" stroke="#858585" stroke-width="1.100"/>
<text transform="translate(26,385) rotate(-90)" font-size="10" fill="#333">100</text>
<line x1="0" y1="393.5" x2="8" y2="393.5" stroke="#9e9e9e" stroke-width="1.500"/>
<line x1="0" y1="397.5" x2="11" y2="397.5" stroke="#9e9e9e" stroke-width="1.500"/>
<line x1="0" y1="400.5" x2="8" y2="400.5" stroke="#9e9e9e" stroke-width="1.500"/>
<line x1="0" y1="404.5" x2="11" y2="404.5" stroke="#9e9e9e" stroke-width="1.500"/>
<line x1="0" y1="408.5" x2="8" y2="408.5" stroke="#9e9e9e" stroke-width="1.500"/>
<line x1="0" y1="412.5" x2="11" y2="412.5" stroke="#9e9e9e" stroke-width="1.500"/>
<line x1="0" y1="416.5" x2="8" y2="416.5" stroke="#9e9e9e" stroke-width="1.500"/>
<line x1="0" y1="420.5" x2="11" y2="420.5" stroke="#9e9e9e" stroke-width="1.500"/>
<line x1="0" y1="424.5" x2="8" y2="424.5" stroke="#9e9e9e" stroke-width="1.500"/>
<line x1="0" y1="428.5" x2="29" y2="428.5" stroke="#858585" stroke-width="1.100"/>
<text transform="translate(26,424) rotate(-90)" font-size="10" fill="#333">110</text>
<line x1="0" y1="432.5" x2="8" y2="432.5" stroke="#9e9e9e" stroke-width="1.500"/>
<line x1="0" y1="435.5" x2="11" y2="435.5" stroke="#9e9e9e" stroke-width="1.500"/>
<line x1="0" y1="439.5" x2="8" y2="439.5" stroke="#9e9e9e" stroke-width="1.500"/>
<line x1="0" y1="443.5" x2="11" y2="443.5" stroke="#9e9e9e" stroke-width="1.500"/>
<line x1="0" y1="447.5" x2="8" y2="447.5" stroke="#9e9e9e" stroke-width="1.500"/>
<line x1="0" y1="451.5" x2="11" y2="451.5" stroke="#9e9e9e" stroke-width="1.500"/>
<line x1="0" y1="455.5" x2="8" y2="455.5" stroke="#9e9e9e" stroke-width="1.500"/>
<line x1="0" y1="459.5" x2="11" y2="459.5" stroke="#9e9e9e" stroke-width="1.500"/>
<line x1="0" y1="463.5" x2="8" y2="463.5" stroke="#9e9e9e" stroke-width="1.500"/>
<line x1="0" y1="466.5" x2="29" y2="466.5" stroke="#858585" stroke-width="1.100"/>
<text transform="translate(26,462) rotate(-90)" font-size="10" fill="#333">120</text>
<line x1="0" y1="470.5" x2="8" y2="470.5" stroke="#9e9e9e" stroke-width="1.500"/>
<line x1="0" y1="474.5" x2="11" y2="474.5" stroke="#9e9e9e" stroke-width="1.500"/>
<line x1="0" y1="478.5" x2="8" y2="478.5" stroke="#9e9e9e" stroke-width="1.500"/>
<line x1="0" y1="482.5" x2="11" y2="482.5" stroke="#9e9e9e" stroke-width="1.500"/>
<line x1="0" y1="486.5" x2="8" y2="486.5" stroke="#9e9e9e" stroke-width="1.500"/>
<line x1="0" y1="490.5" x2="11" y2="490.5" stroke="#9e9e9e" stroke-width="1.500"/>
<line x1="0" y1="494.5" x2="8" y2="494.5" stroke="#9e9e9e" stroke-width="1.500"/>
<line x1="0" y1="498.5" x2="11" y2="498.5" stroke="#9e9e9e" stroke-width="1.500"/>
<line x1="0" y1="501.5" x2="8" y2="501.5" stroke="#9e9e9e" stroke-width="1.500"/>
<line x1="0" y1="505.5" x2="29" y2="505.5" stroke="#858585" stroke-width="1.100"/>
<text transform="translate(26,501) rotate(-90)" font-size="10" fill="#333">130</text>
<line x1="0" y1="509.5" x2="8" y2="509.5" stroke="#9e9e9e" stroke-width="1.500"/>
<line x1="0" y1="513.5" x2="11" y2="513.5" stroke="#9e9e9e" stroke-width="1.500"/>
<line x1="0" y1="517.5" x2="8" y2="517.5" stroke="#9e9e9e" stroke-width="1.500"/>
<line x1="0" y1="521.5" x2="11" y2="521.5" stroke="#9e9e9e" stroke-width="1.500"/>
<line x1="0" y1="525.5" x2="8" y2="525.5" stroke="#9e9e9e" stroke-width="1.500"/>
<line x1="0" y1="529.5" x2="11" y2="529.5" stroke="#9e9e9e" stroke-width="1.500"/>
<line x1="0" y1="533.5" x2="8" y2="533.5" stroke="#9e9e9e" stroke-width="1.500"/>
<line x1="0" y1="536.5" x2="11" y2="536.5" stroke="#9e9e9e" stroke-width="1.500"/>
<line x1="0" y1="540.5" x2="8" y2="540.5" stroke="#9e9e9e" stroke-width="1.500"/>
<line x1="0" y1="544.5" x2="29" y2="544.5" stroke="#858585" stroke-width="1.100"/>
<text transform="translate(26,540) rotate(-90)" font-size="10" fill="#333">140</text>
<line x1="0" y1="548.5" x2="8" y2="548.5" stroke="#9e9e9e" stroke-width="1.500"/>
<line x1="0" y1="552.5" x2="11" y2="552.5" stroke="#9e9e9e" stroke-width="1.500"/>
<line x1="0" y1="556.5" x2="8" y2="556.5" stroke="#9e9e9e" stroke-width="1.500"/>
<line x1="0" y1="560.5" x2="11" y2="560.5" stroke="#9e9e9e" stroke-width="1.500"/>
<line x1="0" y1="564.5" x2="8" y2="564.5" stroke="#9e9e9e" stroke-width="1.500"/>
<line x1="0" y1="568.5" x2="11" y2="568.5" stroke="#9e9e9e" stroke-width="1.500"/>
<line x1="0" y1="571.5" x2="8" y2="571.5" stroke="#9e9e9e" stroke-width="1.500"/>
<line x1="0" y1="575.5" x2="11" y2="575.5" stroke="#9e9e9e" stroke-width="1.500"/>
<line x1="0" y1="579.5" x2="8" y2="579.5" stroke="#9e9e9e" stroke-width="1.500"/>
<line x1="0" y1="583.5" x2="29" y2="583.5" stroke="#858585" stroke-width="1.100"/>
<text transform="translate(26,579) rotate(-90)" font-size="10" fill="#333">150</text>
<line x1="0" y1="587.5" x2="8" y2="587.5" stroke="#9e9e9e" stroke-width="1.500"/>
<line x1="0" y1="591.5" x2="11" y2="591.5" stroke="#9e9e9e" stroke-width="1.500"/>
<line x1="0" y1="595.5" x2="8" y2="595.5" stroke="#9e9e9e" stroke-width="1.500"/>
<line x1="0" y1="599.5" x2="11" y2="599.5" stroke="#9e9e9e" stroke-width="1.500"/>
<line x1="0" y1="602.5" x2="8" y2="602.5" stroke="#9e9e9e" stroke-width="1.500"/>
<line x1="0" y1="606.5" x2="11" y2="606.5" stroke="#9e9e9e" stroke-width="1.500"/>
<line x1="0" y1="610.5" x2="8" y2="610.5" stroke="#9e9e9e" stroke-width="1.500"/>
<line x1="0" y1="614.5" x2="11" y2="614.5" stroke="#9e9e9e" stroke-width="1.500"/>
<line x1="0" y1="618.5" x2="8" y2="618.5" stroke="#9e9e9e" stroke-width="1.500"/>
<line x1="0" y1="622.5" x2="29" y2="622.5" stroke="#858585" stroke-width="1.100"/>
<text transform="translate(26,618) rotate(-90)" font-size="10" fill="#333">160</text>
<line x1="0" y1="626.5" x2="8" y2="626.5" stroke="#9e9e9e" stroke-width="1.500"/>
<line x1="0" y1="630.5" x2="11" y2="630.5" stroke="#9e9e9e" stroke-width="1.500"/>
<line x1="0" y1="634.5" x2="8" y2="634.5" stroke="#9e9e9e" stroke-width="1.500"/>
<text transform="translate(26,657) rotate(-90)" font-size="10" fill="#333">170</text>
</svg>
    <div class="abs" style="left:776px;top:395px;width:756px;height:420px;background:#fff"></div>
    <div class="abs" style="left:1512px;top:316.500px;font-size:16px;color:#333">1</div>
    <!-- logo -->
    <svg class="abs" style="left:784.5px;top:316px" width="59" height="60" viewBox="0 0 59 60">
      <path d="M7 0H51.5A7 7 0 0 1 58.5 7V18.5A7 7 0 0 1 51.5 25.500H7.700V32.530A9 9 0 0 0 0 35.840V7A7 7 0 0 1 7 0ZM8.700 8.100H49.700a1 1 0 0 1 1 1V16.800a1 1 0 0 1 -1 1H8.700a1 1 0 0 1 -1 -1V9.100a1 1 0 0 1 1 -1Z" fill="#dcc36a" fill-rule="evenodd"/>
      <path d="M51.5 60H7A7 7 0 0 1 0 53V41.5A7 7 0 0 1 7 34.500H50.800V27.470A9 9 0 0 0 58.5 24.160V53A7 7 0 0 1 51.5 60ZM49.800 51.900H8.800a1 1 0 0 1 -1 -1V43.200a1 1 0 0 1 1 -1H49.800a1 1 0 0 1 1 1V50.900a1 1 0 0 1 -1 1Z" fill="#cd9b41" fill-rule="evenodd"/>
    </svg>
    <!-- chart -->
    <svg class="abs" style="left:0;top:0" width="1847" height="931" viewBox="0 0 1847 931">
      <path d="M1155.2 587.7L1155.20 444.20A143.5 143.5 0 0 1 1256.67 486.23Z" fill="#f3b521"/>
<path d="M1155.2 587.7L1256.67 486.23A143.5 143.5 0 0 1 1210.12 720.28Z" fill="#bbd8b3"/>
<path d="M1155.2 587.7L1210.12 720.28A143.5 143.5 0 0 1 1100.28 720.28Z" fill="#8bada6"/>
<path d="M1155.2 587.7L1100.28 720.28A143.5 143.5 0 0 1 1011.70 587.70Z" fill="#30336b"/>
<path d="M1155.2 587.7L1011.70 587.70A143.5 143.5 0 0 1 1155.20 444.20Z" fill="#fedc5a"/>
      <g font-family="DejaVu Sans, sans-serif" font-size="14.500" fill="#000" style="font-family:'DejaVu Sans',sans-serif">
        <text transform="translate(1232.3,437.5) scale(1,1.09)" style="font-family:'DejaVu Sans',sans-serif">Item 1</text>
        <text x="1232" y="456.500" font-weight="bold" font-size="16.300" style="font-family:'DejaVu Sans',sans-serif">12.50%</text>
        <text transform="translate(1298.3,634.5) scale(1,1.09)" style="font-family:'DejaVu Sans',sans-serif">Item 2</text>
        <text x="1298" y="654" font-weight="bold" font-size="16.300" style="font-family:'DejaVu Sans',sans-serif">31.25%</text>
        <text transform="translate(1157.3,750.0) scale(1,1.09)" style="font-family:'DejaVu Sans',sans-serif">Item 3</text>
        <text x="1157" y="769.500" font-weight="bold" font-size="16.300" style="font-family:'DejaVu Sans',sans-serif">12.50%</text>
        <text transform="translate(1036.3,686.0) scale(1,1.09)" text-anchor="end" style="font-family:'DejaVu Sans',sans-serif">Item 4</text>
        <text x="1036" y="705.500" text-anchor="end" font-weight="bold" font-size="16.300" style="font-family:'DejaVu Sans',sans-serif">18.75%</text>
        <text transform="translate(1034.3,468.5) scale(1,1.09)" text-anchor="end" style="font-family:'DejaVu Sans',sans-serif">Item 5</text>
        <text x="1034" y="487.500" text-anchor="end" font-weight="bold" font-size="16.300" style="font-family:'DejaVu Sans',sans-serif">25.00%</text>
      </g>
      <!-- selection -->
      <g stroke="#00c4cc" stroke-width="2" fill="none">
        <rect x="904" y="337" width="500" height="500"/>
        <line x1="776" y1="815" x2="1532" y2="815"/>
        <line x1="1154" y1="837" x2="1154" y2="872"/>
      </g>
      <g fill="#fff" stroke="#b4b7c0" stroke-width="1">
        <circle cx="904" cy="337" r="6.400"/>
        <circle cx="1404" cy="337" r="6.400"/>
        <circle cx="904" cy="837" r="6.400"/>
        <circle cx="1404" cy="837" r="6.400"/>
        <circle cx="1154" cy="815" r="6.400"/>
        <rect x="901.300" y="580.800" width="5.400" height="16.200" rx="2.700" stroke="#b9bcc8"/>
        <rect x="1401.300" y="580.800" width="5.400" height="16.200" rx="2.700" stroke="#b9bcc8"/>
      </g>
      <circle cx="1154" cy="877" r="5" fill="#fff" stroke="#00c4cc" stroke-width="2"/>
    </svg>
    <!-- help button -->
    <div class="abs" style="left:1770px;top:852px;width:62px;height:62px;border-radius:15px;background:linear-gradient(45deg,#8271f5,#a183fa);box-shadow:0 3px 10px rgba(0,0,0,.25)">
      <svg class="abs" style="left:17.400px;top:18.600px" width="28" height="28" viewBox="-14 -14 28 28">
        <circle r="12" fill="#fff"/>
        <circle r="4.900" fill="#8d79f7"/>
        <circle r="8.400" fill="none" stroke="#8d79f7" stroke-width="3.600" stroke-dasharray="7.040 6.155" stroke-dashoffset="3.520"/>
      </svg>
    </div>
  </div>
  <!-- shadow under topbar -->
  <div class="abs" style="left:0;top:0;width:1422px;height:42px;background:linear-gradient(rgba(0,0,0,.22),rgba(0,0,0,.135) 7px,rgba(0,0,0,.065) 16px,rgba(0,0,0,.025) 28px,rgba(0,0,0,0) 42px)"></div>
  <div class="abs" style="left:0;top:0;width:60px;height:859px;background:linear-gradient(90deg,rgba(0,0,0,.175),rgba(0,0,0,.105) 6px,rgba(0,0,0,.045) 14px,rgba(0,0,0,.012) 22px,rgba(0,0,0,0) 30px)"></div>
</div>

<!-- LEFT PANEL -->
<div id="panel" class="abs">
  <div class="abs" style="left:0;top:20.500px;width:350px;text-align:center;font-size:15.500px;font-weight:bold;color:#222;letter-spacing:.15px;transform:scaleY(1.08)">Chart Settings</div>
  <div class="abs" style="left:10px;top:74px;width:149px;text-align:center;font-size:14px;font-weight:bold;color:#555">Data</div>
  <div class="abs" style="left:191px;top:74px;width:150px;text-align:center;font-size:14px;color:#666">Settings</div>
  <div class="abs" style="left:10px;top:102px;width:149px;height:2px;background:#7c3bed"></div>
  <div class="abs" style="left:26px;top:131px;font-size:16px;line-height:24px;color:#6c6c6c">Do you want dynamic<br>charts to be generated?</div>
  <div class="tog" style="left:256px;top:144px;background:#d9d7d7"><i style="left:2px"></i></div>
  <table>
    <colgroup><col style="width:31px"><col style="width:91px"><col style="width:91px"><col style="width:116px"></colgroup>
    <tr><th></th><th>Label</th><th>Value</th><th>Description</th></tr>
    <tr><td class="d">···</td><td>Item 1</td><td>20</td><td><div>item 1 description</div></td></tr>
    <tr><td class="d">···</td><td>Item 2</td><td>50</td><td><div>item 2 description</div></td></tr>
    <tr><td class="d">···</td><td>Item 3</td><td>20</td><td><div>item 3 description</div></td></tr>
    <tr><td class="d">···</td><td>Item 4</td><td>30</td><td><div>item 4 description</div></td></tr>
    <tr><td class="d">···</td><td>Item 5</td><td>40</td><td><div>item 5 description</div></td></tr>
    <tr><td class="d">···</td><td></td><td></td><td></td></tr>
  </table>
  <div class="abs" style="left:42px;top:491px;width:90px;height:40px;border:1px solid #40a9ff;border-radius:0;box-shadow:0 0 0 2px rgba(24,144,255,.2);background:#fff"><div class="abs" style="left:8px;top:11px;width:1px;height:16px;background:#333"></div></div>
  <svg class="abs" style="left:13px;top:544px" width="10" height="12" viewBox="0 0 10 12" stroke="#1890ff" stroke-width="2.200"><path d="M5 0v12M0 6h10"/></svg><div class="abs" style="left:29px;top:542.600px;font-size:14px;color:#1890ff;letter-spacing:.05px">Add Row</div>
</div>
<!-- close tab -->
<div class="abs" style="left:425px;top:102px;width:40px;height:40px;background:#fff;border-radius:0 20px 20px 0;box-shadow:2px 1px 4px rgba(0,0,0,.18);font-size:18px;line-height:42px;color:#555;padding-left:11.500px">X</div>

<!-- TOP BAR -->
<div id="topbar" class="abs">
  <div class="abs tt" style="left:62px;top:28px">DOCUMENT DEMO</div>
  <!-- toolbar icons (page coords) -->
  <svg class="abs" style="left:215px;top:20px" width="140" height="30" viewBox="290 22 140 30" fill="none" stroke-width="1.400" stroke-linejoin="round" stroke-linecap="round">
    <g stroke="#8f9296"><path d="M307.700 29.200L311.200 32.400L303 40.800L298.500 41.300V37.800Z"/><path d="M305.800 31.300L309.400 34.400"/><path d="M296 44.300H312.100" stroke-linecap="butt"/></g>
    <g stroke="#cfd1d4" stroke-width="1.500"><path d="M338.400 29.200L334.100 33.200L338.400 37.100"/><path d="M334.100 33.200H346.700A5 5 0 0 1 346.700 43.200H341.100"/></g>
    <g stroke="#525961" stroke-width="1.500"><path d="M379.800 29.200L383.900 33.200L379.800 37.100"/><path d="M383.900 33.200H371.500A5 5 0 0 0 371.500 43.200H376.700"/></g>
    <g stroke="#6a7279" stroke-width="1.400"><path d="M404.500 44.300A4.900 4.900 0 0 1 403.400 34.600A5.500 5.500 0 0 1 414.100 34.400L416.100 34.900A4.700 4.700 0 0 1 416.100 44.300Z"/><path d="M405.500 37.300L408.400 40.400L416.900 31.600"/></g>
  </svg>
  <div class="abs" style="left:357px;top:19px;width:150px;height:32px;border:1px solid #fff;border-radius:4px;color:#fff;font-size:14px;line-height:28.500px;text-align:center;-webkit-text-stroke:.3px #fff">Times New Roman</div>
  <div class="sw" style="left:527px;background:#f3b521"></div>
  <div class="sw" style="left:553px;background:#bbd8b3"></div>
  <div class="sw" style="left:579px;background:#8bada6"></div>
  <div class="sw" style="left:605px;background:#30336b"></div>
  <div class="sw" style="left:631px;background:#fedc5a"></div>
  <div class="sw" style="left:657px;background:#8e5edb"></div>
  <svg class="abs" style="left:683px;top:27px" width="16" height="16" viewBox="0 0 16 16" stroke="#fff" stroke-width="1.500"><path d="M8 1.500v13M1.500 8h13"/></svg>
  <div class="tog" style="left:1448px;top:23px;background:#b1252c"><i style="left:24px"></i></div>
  <div class="abs" style="left:1502px;top:25px;font-size:16px;color:#fff;-webkit-text-stroke:.3px #fff">Ruler</div>
  <div class="tog" style="left:1550px;top:23px;background:#d9d7d7"><i style="left:2px"></i></div>
  <div class="abs" style="left:1604px;top:25px;font-size:16px;color:#fff;-webkit-text-stroke:.3px #fff">Read Mode</div>
  <svg class="abs" style="left:1708px;top:22px" width="46" height="26" viewBox="0 0 46 26" fill="none" stroke="#fff" stroke-width="1.300">
    <path d="M2 5.500h20M2 13.500h20M2 21.500h20"/>
    <circle cx="8" cy="5.500" r="2" fill="#fff" stroke="none"/><circle cx="15.500" cy="13.500" r="2" fill="#fff" stroke="none"/><circle cx="4" cy="21.500" r="2" fill="#fff" stroke="none"/>
    <path d="M31 9.500l6 8 6-8" stroke-width="1.300"/>
  </svg>
</div>

<!-- SIDEBAR -->
<div id="sidebar" class="abs">
  <div class="abs" style="left:52px;top:0;width:23px;height:210px;background:linear-gradient(90deg,rgba(0,0,0,0),rgba(0,0,0,.045))"></div>
  <div id="sidegrad" class="abs"></div>
  <!-- logo -->
  <svg class="abs" style="left:17px;top:18px" width="41" height="41" viewBox="0 0 41 41">
    <defs><linearGradient id="lg1" gradientUnits="userSpaceOnUse" x1="0" y1="60" x2="58.5" y2="30"><stop offset="0" stop-color="#2a0845"/><stop offset=".5" stop-color="#8a1c2c"/><stop offset="1" stop-color="#e23d1c"/></linearGradient></defs>
    <g transform="translate(20.300,20.500) rotate(-45) scale(.367) translate(-29.250,-30)">
      <path d="M7 0H51.5A7 7 0 0 1 58.5 7V18.5A7 7 0 0 1 51.5 25.500H7.700V32.530A9 9 0 0 0 0 35.840V7A7 7 0 0 1 7 0ZM8.700 8.100H49.700a1 1 0 0 1 1 1V16.800a1 1 0 0 1 -1 1H8.700a1 1 0 0 1 -1 -1V9.100a1 1 0 0 1 1 -1Z" fill="#000" fill-rule="evenodd"/>
      <path d="M51.5 60H7A7 7 0 0 1 0 53V41.5A7 7 0 0 1 7 34.500H50.800V27.470A9 9 0 0 0 58.5 24.160V53A7 7 0 0 1 51.5 60ZM49.800 51.900H8.800a1 1 0 0 1 -1 -1V43.200a1 1 0 0 1 1 -1H49.800a1 1 0 0 1 1 1V50.900a1 1 0 0 1 -1 1Z" fill="url(#lg1)" fill-rule="evenodd"/>
    </g>
  </svg>
  <div class="abs" style="left:29.300px;top:146.300px;width:0;height:0"><div style="position:absolute;left:0;top:0;transform-origin:0 0;transform:rotate(-90deg) scaleX(.97);font-size:14.500px;letter-spacing:0;color:#43384c;white-space:nowrap;line-height:16px">DOCUMENT</div></div>
  <!-- molecules icon -->
  <svg class="abs" style="left:18px;top:213px" width="40" height="40" viewBox="18 213 40 40" fill="none" stroke="#c7b0c3" stroke-width="1.100">
    <defs><mask id="mk"><rect x="18" y="213" width="40" height="40" fill="#fff"/><circle cx="34.760" cy="230.600" r="8.800" fill="#000"/></mask></defs>
    <g mask="url(#mk)"><circle cx="46.600" cy="232.800" r="5.300"/><circle cx="31.100" cy="242.300" r="6.400"/></g>
    <circle cx="34.760" cy="230.600" r="8.800"/>
    <ellipse cx="34.760" cy="231" rx="2.900" ry="3"/>
    <path d="M45.100 231v3.400M48 231v3.400M45.100 232.700h2.900M29.100 240.900v3.600M32 240.900v3.600M29.100 242.700h2.900" stroke-width="1"/>
  </svg>
  <!-- active icon -->
  <div class="abs" style="left:16px;top:283px;width:44px;height:44px;border-radius:50%;background:#fff"></div>
  <svg class="abs" style="left:24px;top:291px" width="28" height="28" viewBox="-14 -14 28 28" fill="none" stroke="#0a0a0a" stroke-width="1.900">
    <g transform="rotate(45)">
      <rect x="-7.560" y="-7.560" width="6" height="6" rx="2.200"/><rect x="1.560" y="-7.560" width="6" height="6" rx="2.200"/>
      <rect x="-7.560" y="1.560" width="6" height="6" rx="2.200"/><rect x="1.560" y="1.560" width="6" height="6" rx="2.200"/>
    </g>
  </svg>
  <!-- image icon -->
  <svg class="abs" style="left:26px;top:363px" width="24" height="24" viewBox="26 363 24 24" fill="none" stroke="#d6bdc9" stroke-width="1.500" stroke-linejoin="round">
    <rect x="29.700" y="366.700" width="16.800" height="16.800" rx="2"/>
    <circle cx="34.540" cy="371.540" r="1.500" fill="#d6bdc9" stroke="none"/>
    <path d="M30.300 381.900L34.300 376.300L39.200 382.800M37.300 378.400L41.400 373.300L46.200 379.400" stroke-width="1.400"/>
  </svg>
</div>

<div id="topline" class="abs"></div>
<!-- red annotation box -->
<div class="abs" style="left:62px;top:248px;width:385px;height:402px;border:5px solid #ec1c24"></div>
</body>
</html>
